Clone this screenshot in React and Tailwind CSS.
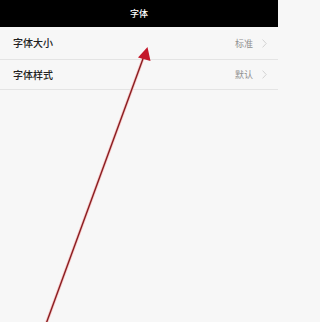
export default function App() {
  const font = { fontFamily: '"Noto Sans CJK SC", "Noto Sans", sans-serif' };
  const Row = ({ label, value, h }) => (
    <div className={`flex items-center justify-between pl-[13px] pr-[11px] border-b border-[#e4e4e4] ${h}`}>
      <span className="text-[10px] text-[#222222] leading-none font-medium">{label}</span>
      <div className="flex items-center gap-[9px]">
        <span className="text-[9px] text-[#8f8f8f] leading-none">{value}</span>
        <svg width="5" height="9" viewBox="0 0 5 9" fill="none">
          <path d="M0.6 0.6 L4.2 4.5 L0.6 8.4" stroke="#cfcfcf" strokeWidth="0.9" />
        </svg>
      </div>
    </div>
  );
  return (
    <div className="relative w-full min-w-[278px] h-screen min-h-[322px] bg-[#f7f7f7] overflow-hidden" style={font}>
      <div className="w-[278px]">
        <div className="h-[27px] bg-black flex items-center justify-center">
          <span className="text-[9px] text-white leading-none font-medium">字体</span>
        </div>
        <Row label="字体大小" value="标准" h="h-[33px]" />
        <Row label="字体样式" value="默认" h="h-[30px]" />
      </div>
      <svg className="absolute left-0 top-0" width="278" height="322" viewBox="0 0 278 322">
        <line x1="46" y1="324" x2="144" y2="56" stroke="#f7c9c9" strokeWidth="3" strokeLinecap="round" />
        <line x1="46" y1="324" x2="144" y2="56" stroke="#8a1f22" strokeWidth="1.4" strokeLinecap="round" />
        <polygon points="147.5,47 150.5,61 138,57.5" fill="#c4182a" />
      </svg>
    </div>
  );
}
